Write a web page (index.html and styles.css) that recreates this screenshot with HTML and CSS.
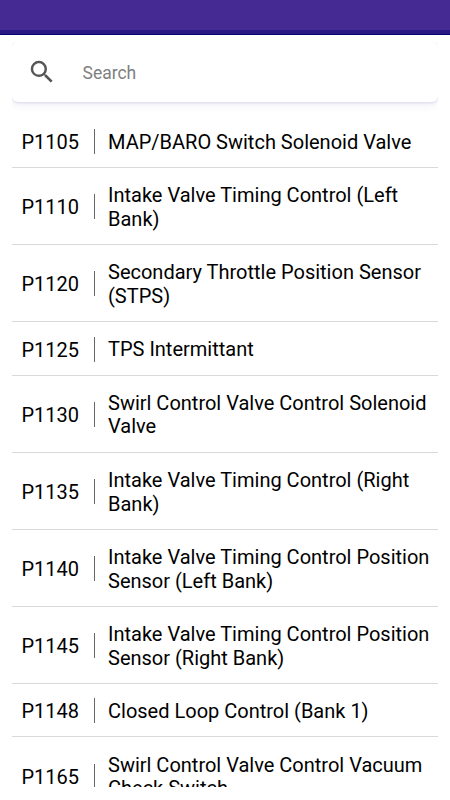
FILE: index.html
```
<!DOCTYPE html>
<html lang="en">
<head>
  <meta charset="UTF-8" />
  <meta name="viewport" content="width=device-width, initial-scale=1.0"/>
  <title>Trouble Codes</title>
  <link rel="stylesheet" href="styles.css">
</head>
<body>

  <div class="status-bar"></div>

  <div class="content">
    <!-- Search -->
    <div class="search-wrap">
      <label class="search">
        <svg class="search-icon" viewBox="0 0 24 24"><path d="M15.5 14h-.79l-.28-.27A6.471 6.471 0 0 0 16 9.5 6.5 6.5 0 1 0 9.5 16c1.61 0 3.09-.59 4.23-1.57l.27.28v.79l5 4.99L20.49 19l-4.99-5zm-6 0C7.01 14 5 11.99 5 9.5S7.01 5 9.5 5 14 7.01 14 9.5 11.99 14 9.5 14z"/></svg>
        <input type="text" placeholder="Search" />
      </label>
    </div>

    <!-- Code list -->
    <ul class="codes">
      <li><span class="code">P1105</span><span class="name">MAP/BARO Switch Solenoid Valve</span></li>
      <li><span class="code">P1110</span><span class="name">Intake Valve Timing Control (Left Bank)</span></li>
      <li><span class="code">P1120</span><span class="name">Secondary Throttle Position Sensor (STPS)</span></li>
      <li><span class="code">P1125</span><span class="name">TPS Intermittant</span></li>
      <li><span class="code">P1130</span><span class="name">Swirl Control Valve Control Solenoid Valve</span></li>
      <li><span class="code">P1135</span><span class="name">Intake Valve Timing Control (Right Bank)</span></li>
      <li><span class="code">P1140</span><span class="name">Intake Valve Timing Control Position Sensor (Left Bank)</span></li>
      <li><span class="code">P1145</span><span class="name">Intake Valve Timing Control Position Sensor (Right Bank)</span></li>
      <li><span class="code">P1148</span><span class="name">Closed Loop Control (Bank 1)</span></li>
      <li><span class="code">P1165</span><span class="name">Swirl Control Valve Control Vacuum Check Switch</span></li>
    </ul>
  </div>

</body>
</html>
```
FILE: styles.css
```
* {
  box-sizing: border-box;
  margin: 0;
  padding: 0;
}

body {
  height: 800px;
  background: #fff;
  color: #000;
  font-family: Roboto, sans-serif;
  overflow: hidden;
}

.status-bar {
  height: 35px;
  background: linear-gradient(#452a94 0 30px, #281785 30px 34px, #05006b 34px);
}

.content {
  height: 752px;
  padding: 7px 12px 0;
  overflow: hidden;
}

/* clips the card shadow at the sides */
.search-wrap {
  height: 72.4px;
  overflow: hidden;
}

.search {
  display: flex;
  align-items: center;
  height: 60px;
  padding: 0 15px;
  border-radius: 6px;
  background: #fff;
  box-shadow: 0 1px 3px rgba(70, 60, 150, 0.17), 0 4px 8px rgba(70, 60, 150, 0.06);
}

.search-icon {
  width: 30px;
  height: 30px;
  margin-right: 25.5px;
  fill: #555;
}

.search input {
  flex: 1;
  min-width: 0;
  padding-top: 2px;
  border: none;
  outline: none;
  background: transparent;
  font: 400 17.5px Roboto, sans-serif;
}

.search input::placeholder {
  color: #808080;
}

.codes {
  list-style: none;
}

.codes li {
  display: flex;
  align-items: center;
  padding: 16.3px 0 12.5px 9.5px;
  border-bottom: 1px solid #d9d9d9;
  font-size: 20px;
  line-height: 23.65px;
}

.code {
  width: 73.5px;
  height: 25px;
  line-height: 26px;
  margin: -2.2px 13px 0 0;
  border-right: 1px solid #666;
}

.name {
  flex: 1;
}
```
